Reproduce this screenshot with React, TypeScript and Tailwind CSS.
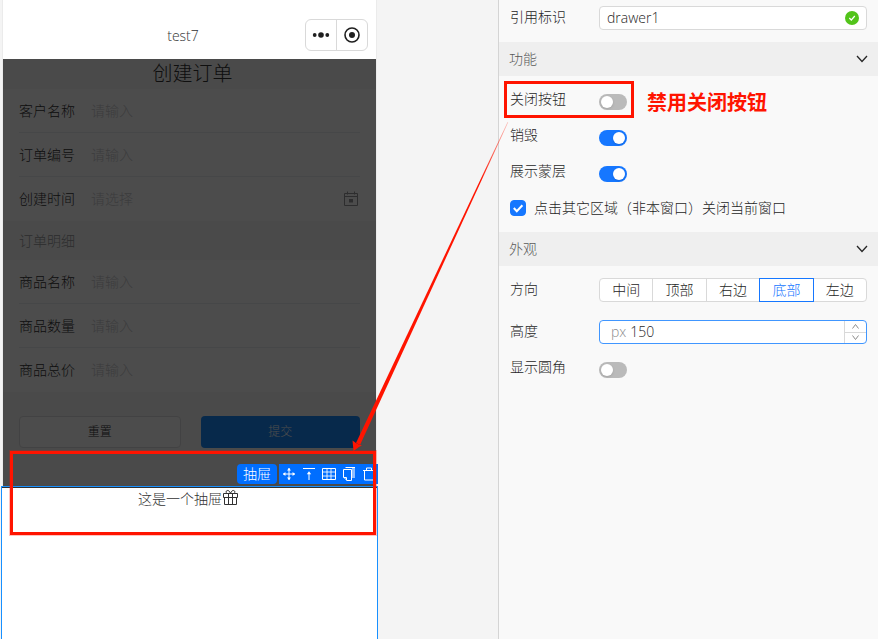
import React, { useState } from 'react';

interface FieldProps {
  id: string;
  label: string;
  placeholder?: string;
  icon?: React.ReactNode;
  last?: boolean;
}

const DIRECTIONS = ['中间', '顶部', '右边', '底部', '左边'];

const CalendarIcon = () => (
  <svg width="16" height="16" viewBox="0 0 16 16" fill="none" stroke="#969799">
    <path d="M0.5 2.5h13v12h-13zM0.5 5.5h13M3.5 0.5v3M10.5 0.5v3" />
    <path d="M5 8h4v3.5H5z" fill="#969799" stroke="none" />
  </svg>
);

const GiftIcon = () => (
  <svg width="17" height="17" viewBox="0 0 17 17" fill="none" stroke="#323233" className="-translate-y-0.5">
    <path d="M1.5 4.5h14v4h-14zM2.5 8.5h12v7h-12zM6.5 4.5v11M10.5 4.5v11" />
    <path d="M8.5 4.3C7.5 2 6.5 1.3 5.3 1.5C3.8 1.8 3.8 3.6 5 4.3M8.5 4.3C9.5 2 10.5 1.3 11.7 1.5C13.2 1.8 13.2 3.6 12 4.3" />
  </svg>
);

const ChevronIcon = () => (
  <svg width="12" height="8" viewBox="0 0 12 8" fill="none" stroke="#262626" strokeWidth="1.3">
    <path d="M1 1l5 5.5L11 1" />
  </svg>
);

// Actions of the selected widget, left to right
const TOOLS = [
  {
    name: '移动',
    icon: (
      <>
        <path d="M7 1v12M1 7h12" />
        <path d="M7 1l2 2.4H5zM7 13l2-2.4H5zM1 7l2.4-2v4zM13 7l-2.4-2v4z" fill="white" stroke="none" />
      </>
    ),
  },
  {
    name: '置顶',
    icon: (
      <>
        <path d="M1 1.5h12M7 6v7" />
        <path d="M7 4.2l2.2 3H4.8z" fill="white" stroke="none" />
      </>
    ),
  },
  {
    name: '布局',
    icon: (
      <>
        <path d="M0.5 1.5h13v11h-13z" />
        <path d="M0.5 5h13M0.5 9h13M5 1.5v11M9 1.5v11" strokeOpacity="0.85" />
      </>
    ),
  },
  {
    name: '复制',
    icon: (
      <>
        <path d="M10 1h3v10h-3z" fill="white" fillOpacity="0.55" stroke="none" />
        <path d="M3.5 0.5h9.5M1.5 2.5h8v11h-4.5l-3.5-3.5zM1.5 10.5h3v3" />
      </>
    ),
  },
  {
    name: '删除',
    icon: <path d="M1 3.5h12M4.5 3.5v-2.5h5v2.5M2.5 3.5v9.5h9v-9.5" />,
  },
];

const MobileField: React.FC<FieldProps> = ({ id, label, placeholder = '请输入', icon, last }) => (
  <div className="bg-white px-4">
    <div className={`flex h-11 items-center border-b ${last ? 'border-transparent' : 'border-[#ebedf0]'}`}>
      <label htmlFor={id} className="w-[72px] shrink-0 text-[#323233]">{label}</label>
      <input
        id={id}
        type="text"
        placeholder={placeholder}
        className="min-w-0 flex-1 bg-transparent outline-none placeholder:text-[#c8c9cc]"
      />
      {icon}
    </div>
  </div>
);

const PanelHeader: React.FC<{ title: string }> = ({ title }) => (
  <h2>
    <button type="button" className="flex h-[34px] w-full items-center justify-between bg-[#efefef] px-2.5 text-[#595959]">
      {title}
      <ChevronIcon />
    </button>
  </h2>
);

const Label: React.FC<{ htmlFor?: string; raised?: boolean; children: React.ReactNode }> = ({ htmlFor, raised, children }) => (
  <label htmlFor={htmlFor} className={`w-[89px] shrink-0 ${raised ? 'pb-1.5' : 'pb-0.5'}`}>{children}</label>
);

const Switch: React.FC<{ id: string; on?: boolean }> = ({ id, on = false }) => {
  const [checked, setChecked] = useState(on);
  return (
    <input
      id={id}
      type="checkbox"
      role="switch"
      checked={checked}
      onChange={(e) => setChecked(e.target.checked)}
      className="relative h-4 w-7 shrink-0 cursor-pointer appearance-none rounded-full bg-[#bababa] before:absolute before:top-0.5 before:left-0.5 before:h-3 before:w-3 before:rounded-full before:bg-white before:shadow-sm checked:bg-[#1677ff] checked:before:left-3.5"
    />
  );
};

const Phone: React.FC = () => (
  <section className="flex w-[375px] shrink-0 flex-col border-x border-[#ebebeb]">
    <header className="flex items-center bg-white pt-[19px] pr-2 pb-2 pl-[58px]">
      <h1 className="flex-1 pt-0.5 text-center text-[#323233]">test7</h1>
      <div className="flex h-8 w-[63px] rounded-md border border-[#d9d9d9]">
        <button type="button" aria-label="更多" className="flex flex-1 items-center justify-center border-r border-[#d9d9d9]">
          <svg width="18" height="8" viewBox="0 0 18 8" fill="#1f1f1f">
            <circle cx="2.7" cy="4" r="1.9" />
            <circle cx="9" cy="4" r="2.8" />
            <circle cx="15.3" cy="4" r="1.9" />
          </svg>
        </button>
        <button type="button" aria-label="关闭" className="flex flex-1 items-center justify-center">
          <svg width="16" height="16" viewBox="0 0 16 16" fill="none">
            <circle cx="8" cy="8" r="7" stroke="#1f1f1f" strokeWidth="1.6" />
            <circle cx="8" cy="8" r="3" fill="#1f1f1f" />
          </svg>
        </button>
      </div>
    </header>

    <form className="relative bg-[#f7f7f7] pb-[38px]">
      <h2 className="h-[30px] pl-1.5 text-center text-xl leading-[30px] text-[#323233]">创建订单</h2>
      <MobileField id="customer" label="客户名称" />
      <MobileField id="order-no" label="订单编号" />
      <MobileField id="created" label="创建时间" placeholder="请选择" icon={<CalendarIcon />} last />
      <h3 className="h-[39px] px-4 leading-[39px] text-[#969799]">订单明细</h3>
      <MobileField id="goods-name" label="商品名称" />
      <MobileField id="goods-count" label="商品数量" />
      <MobileField id="goods-total" label="商品总价" last />
      <div className="mt-6 flex gap-5 px-4 text-xs">
        <button type="button" className="h-8 flex-1 rounded-sm border border-[#dcdee0] bg-white text-[#323233]">重置</button>
        <button type="button" className="h-8 flex-1 rounded-sm bg-[#1989fa] text-white">提交</button>
      </div>
      {/* Mask under the drawer */}
      <div className="pointer-events-none absolute inset-0 bg-black/70" />
    </form>

    {/* Drawer, currently selected */}
    <div className="relative -mx-0.5 flex flex-1 flex-col border-x border-t border-[#1890ff] bg-white">
      <div className="border-t border-[#303030]" />
      <p className="flex h-[22px] items-center justify-center pr-0.5 text-[#323233]">
        这是一个抽屉
        <GiftIcon />
      </p>
      <div className="absolute right-0 bottom-full mb-[3px] -mr-px flex h-5 gap-0.5">
        <span className="w-10 rounded-sm bg-[#006eff] text-center leading-5 text-white">抽屉</span>
        <div className="flex w-[99px] overflow-hidden bg-[#006eff]">
          {TOOLS.map((tool) => (
            <button key={tool.name} type="button" aria-label={tool.name} className="flex w-5 shrink-0 items-center justify-center">
              <svg width="14" height="14" viewBox="0 0 14 14" fill="none" stroke="white">{tool.icon}</svg>
            </button>
          ))}
        </div>
      </div>
      <div className="pointer-events-none absolute -top-9 right-px left-2 h-[84px] border-3 border-[#ff1400] ring-1 ring-[#ff1400]/25" />
    </div>
  </section>
);

const NumberField: React.FC = () => {
  const [height, setHeight] = useState(150);
  return (
    <div className="flex h-6 flex-1 overflow-hidden rounded-sm border border-[#4096ff] bg-white">
      <span className="pr-1 pl-[11px] text-[#8c8c8c]">px</span>
      <input
        id="height"
        type="text"
        inputMode="numeric"
        value={height}
        onChange={(e) => setHeight(Number(e.target.value) || 0)}
        className="min-w-0 flex-1 outline-none"
      />
      <div className="flex w-[22px] flex-col border-l border-[#d9d9d9]">
        <button type="button" aria-label="增加" onClick={() => setHeight(height + 1)} className="flex flex-1 items-center justify-center border-b border-[#d9d9d9]">
          <svg width="7" height="5" viewBox="0 0 7 5" fill="none" stroke="#8c8c8c"><path d="M0.5 4.5l3-4 3 4" /></svg>
        </button>
        <button type="button" aria-label="减少" onClick={() => setHeight(height - 1)} className="flex flex-1 items-center justify-center">
          <svg width="7" height="5" viewBox="0 0 7 5" fill="none" stroke="#8c8c8c"><path d="M0.5 0.5l3 4 3-4" /></svg>
        </button>
      </div>
    </div>
  );
};

const SettingsPanel: React.FC = () => {
  const [direction, setDirection] = useState('底部');
  const [closeOutside, setCloseOutside] = useState(true);

  return (
    <aside className="w-[380px] shrink-0 border-l border-[#d4d4d4] bg-[#f9f9f9] text-[#262626]">
      <div className="px-[11px] pb-1.5">
        <div className="flex h-9 items-center">
          <Label htmlFor="ref-id">引用标识</Label>
          <div className="flex h-6 min-w-0 flex-1 items-center rounded-sm border border-[#d9d9d9] bg-white px-[7px]">
            <input id="ref-id" type="text" defaultValue="drawer1" className="min-w-0 flex-1 outline-none" />
            <svg width="14" height="14" viewBox="0 0 14 14" fill="none">
              <circle cx="7" cy="7" r="7" fill="#52c41a" />
              <path d="M4.3 7l2 2L9.8 5" stroke="white" strokeWidth="1.2" />
            </svg>
          </div>
        </div>
      </div>

      <PanelHeader title="功能" />
      <div className="px-[11px] py-2">
        <div className="relative flex h-9 items-center">
          <Label htmlFor="close-btn" raised>关闭按钮</Label>
          <Switch id="close-btn" />
          <strong className="pt-0.5 pl-5 text-xl font-bold text-[#ff1400]">禁用关闭按钮</strong>
          <div className="pointer-events-none absolute -top-[3px] -left-1.5 h-[37px] w-[130px] border-3 border-[#ff1400]" />
        </div>
        <div className="flex h-9 items-center">
          <Label htmlFor="destroy" raised>销毁</Label>
          <Switch id="destroy" on />
        </div>
        <div className="flex h-9 items-center">
          <Label htmlFor="mask" raised>展示蒙层</Label>
          <Switch id="mask" on />
        </div>
        <label className="flex h-8 items-center gap-2">
          <span className="relative h-4 w-4">
            <input
              type="checkbox"
              checked={closeOutside}
              onChange={(e) => setCloseOutside(e.target.checked)}
              className="peer block h-4 w-4 appearance-none rounded-sm border border-[#d9d9d9] bg-white checked:border-[#1677ff] checked:bg-[#1677ff]"
            />
            <svg className="pointer-events-none absolute inset-0 hidden peer-checked:block" width="16" height="16" viewBox="0 0 16 16" fill="none">
              <path d="M3.8 8l3 3.2 5.6-6" stroke="white" strokeWidth="2" />
            </svg>
          </span>
          点击其它区域（非本窗口）关闭当前窗口
        </label>
      </div>

      <PanelHeader title="外观" />
      <div className="px-[11px] pt-1">
        <div className="flex h-10 items-center">
          <Label>方向</Label>
          <div role="radiogroup" aria-label="方向" className="flex h-6 flex-1">
            {DIRECTIONS.map((d) => (
              <label
                key={d}
                className="relative -ml-px flex flex-1 cursor-pointer items-center justify-center border border-[#d9d9d9] bg-white first:ml-0 first:rounded-l-sm last:rounded-r-sm has-[:checked]:z-10 has-[:checked]:border-[#1677ff] has-[:checked]:text-[#1677ff]"
              >
                <input type="radio" name="direction" value={d} checked={direction === d} onChange={() => setDirection(d)} className="sr-only" />
                {d}
              </label>
            ))}
          </div>
        </div>
        <div className="flex h-11 items-center">
          <Label htmlFor="height">高度</Label>
          <NumberField />
        </div>
        <div className="flex h-8 items-center">
          <Label htmlFor="rounded" raised>显示圆角</Label>
          <Switch id="rounded" />
        </div>
      </div>
    </aside>
  );
};

export default function App() {
  return (
    <div className="relative flex min-h-screen bg-[#f4f4f4] font-['Open_Sans','Noto_Sans_CJK_SC',sans-serif] text-sm leading-[22px] font-light">
      <main className="flex flex-1 pl-0.5">
        <Phone />
      </main>
      <SettingsPanel />
      {/* Arrow from the switch to the drawer */}
      <svg className="pointer-events-none absolute top-[120px] left-[350px] z-20" width="162" height="334" viewBox="0 0 162 334" fill="#ff1400">
        <defs>
          <linearGradient id="arrowFade" x1="158" y1="0" x2="130" y2="60" gradientUnits="userSpaceOnUse">
            <stop offset="0%" stopColor="#ff1400" stopOpacity="0.25" />
            <stop offset="100%" stopColor="#ff1400" />
          </linearGradient>
        </defs>
        <path d="M157.6 2L158.2 2.3L10 325L6 323Z" fill="url(#arrowFade)" />
        <path d="M3.5 331L2.5 320.5L6 323L10 325L12 325Z" />
      </svg>
    </div>
  );
}
